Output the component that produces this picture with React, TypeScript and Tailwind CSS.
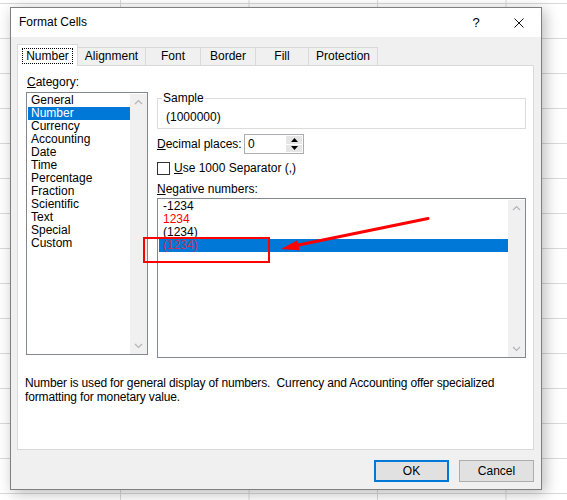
import React from 'react';

const categories = [
  'General',
  'Number',
  'Currency',
  'Accounting',
  'Date',
  'Time',
  'Percentage',
  'Fraction',
  'Scientific',
  'Text',
  'Special',
  'Custom',
];

const negatives = [
  { label: '-1234', red: false },
  { label: '1234', red: true },
  { label: '(1234)', red: false },
  { label: '(1234)', red: true },
];

const tabs = [
  { label: 'Number', w: 'w-[61px]' },
  { label: 'Alignment', w: 'w-[69px]' },
  { label: 'Font', w: 'w-[56px]' },
  { label: 'Border', w: 'w-[56px]' },
  { label: 'Fill', w: 'w-[54px]' },
  { label: 'Protection', w: 'w-[70px]' },
];

const Chevron: React.FC<{ down?: boolean }> = ({ down }) => (
  <svg width="9" height="6" viewBox="0 0 9 6" className="shrink-0">
    <polyline
      points={down ? '1,1 4.5,4.5 8,1' : '1,5 4.5,1.5 8,5'}
      fill="none"
      stroke="#b4b4b4"
      strokeWidth={1.2}
    />
  </svg>
);

const ScrollBar: React.FC = () => (
  <div className="w-[17px] bg-[#f0f0f0] flex flex-col items-center justify-between py-[5px]">
    <Chevron />
    <Chevron down />
  </div>
);

export default function App() {
  return (
    <div className="relative w-[567px] h-[500px] overflow-hidden bg-white bg-[linear-gradient(to_right,#d9d9d9_1px,transparent_1px),linear-gradient(to_bottom,#d9d9d9_1px,transparent_1px)] bg-[length:128.5px_35px] bg-[position:120px_3px] font-['Liberation_Sans',Arial,sans-serif] text-[12px] text-black">
      {/* dialog window */}
      <div className="absolute left-[10px] top-[7px] w-[532px] h-[483px] flex flex-col border border-[#7f7f7f] bg-[#f0f0f0] shadow-[3px_3px_14px_rgba(0,0,0,0.28)]">
        <div className="h-[29px] bg-white flex items-center pl-[8px]">
          <span className="leading-[15px]">Format Cells</span>
          <span className="ml-auto w-[16px] text-center text-[13px] leading-[15px]">?</span>
          <svg width="10" height="10" viewBox="0 0 10 10" className="ml-[30px] mr-[17px]">
            <path d="M0.5 0.5 L9.5 9.5 M9.5 0.5 L0.5 9.5" stroke="#111" strokeWidth={1} />
          </svg>
        </div>

        <div className="flex-1 flex flex-col pl-[6px] pr-[7px] pt-[7px] pb-[7px]">
          {/* tabs */}
          <div className="flex items-end h-[21px]">
            {tabs.map((t, i) =>
              i === 0 ? (
                <div
                  key={t.label}
                  className={`${t.w} h-[22px] -mb-[1px] relative z-10 bg-white border border-b-0 border-[#d9d9d9] flex items-start justify-center pt-[3px]`}
                >
                  <span className="border border-dotted border-black px-[3px] leading-[14px]">{t.label}</span>
                </div>
              ) : (
                <div
                  key={t.label}
                  className={`${t.w} h-[18px] -ml-[1px] bg-[#f0f0f0] border border-b-0 border-[#d9d9d9] flex items-center justify-center leading-[15px]`}
                >
                  {t.label}
                </div>
              )
            )}
          </div>

          {/* page */}
          <div className="h-[385px] bg-white border border-[#d9d9d9] flex flex-col">
            <div className="flex pl-[8px] pt-[9px]">
              <div className="w-[122px] flex flex-col">
                <div className="leading-[15px] ml-[1px]">
                  <u>C</u>ategory:
                </div>
                <div className="mt-[2px] h-[263px] border border-[#828790] flex p-[1px] pr-0 pb-0">
                  <div className="w-[102px] flex flex-col">
                    {categories.map((c) => (
                      <div
                        key={c}
                        className={`h-[13px] leading-[13px] px-[3px] ${c === 'Number' ? 'bg-[#0078d7] text-white' : ''}`}
                      >
                        {c}
                      </div>
                    ))}
                  </div>
                  <ScrollBar />
                </div>
              </div>

              <div className="ml-[9px] w-[369px] flex flex-col">
                <div className="relative mt-[23px] h-[31px] border border-[#dcdcdc] pt-[11px] pl-[8px] leading-[15px]">
                  <span className="absolute left-[4px] -top-[8px] bg-white px-[1px] leading-[15px]">Sample</span>
                  (1000000)
                </div>

                <div className="mt-[5px] flex items-center h-[20px]">
                  <span className="w-[87px] leading-[15px]">
                    <u>D</u>ecimal places:
                  </span>
                  <div className="w-[60px] h-[20px] border border-[#abadb3] bg-white flex">
                    <span className="flex-1 pl-[3px] leading-[18px]">0</span>
                    <div className="w-[16px] my-[1px] mr-[1px] flex flex-col gap-[1px]">
                      <div className="flex-1 bg-[#e6e6e6] flex items-center justify-center">
                        <svg width="7" height="4" viewBox="0 0 7 4">
                          <polygon points="0,4 3.5,0 7,4" fill="#000" />
                        </svg>
                      </div>
                      <div className="flex-1 bg-[#e6e6e6] flex items-center justify-center">
                        <svg width="7" height="4" viewBox="0 0 7 4">
                          <polygon points="0,0 3.5,4 7,0" fill="#000" />
                        </svg>
                      </div>
                    </div>
                  </div>
                </div>

                <div className="mt-[8px] flex items-center h-[13px]">
                  <div className="w-[13px] h-[13px] border border-[#333] bg-white" />
                  <span className="ml-[4px] leading-[15px]">
                    <u>U</u>se 1000 Separator (,)
                  </span>
                </div>

                <div className="mt-[7px] leading-[15px]">
                  <u>N</u>egative numbers:
                </div>
                <div className="mt-[1px] h-[160px] border border-[#828790] flex p-[1px] pr-0 pb-0">
                  <div className="w-[349px] flex flex-col">
                    {negatives.map((n, i) => {
                      const selected = i === 3;
                      return (
                        <div
                          key={i}
                          className={`h-[13px] leading-[13px] px-[4px] ${selected ? 'bg-[#0078d7]' : ''} ${
                            n.red ? (selected ? 'text-[#c8305c]' : 'text-[#ff0000]') : ''
                          }`}
                        >
                          {n.label}
                        </div>
                      );
                    })}
                  </div>
                  <ScrollBar />
                </div>
              </div>
            </div>

            <p className="mt-[18px] px-[7px] leading-[14px] tracking-[-0.15px]">
              Number is used for general display of numbers.&nbsp; Currency and Accounting offer specialized
              <br />
              formatting for monetary value.
            </p>
          </div>

          <div className="mt-[10px] flex justify-end gap-[10px]">
            <button className="w-[75px] h-[22px] border-2 border-[#0078d7] bg-[#e1e1e1] leading-[15px]">OK</button>
            <button className="w-[75px] h-[22px] border border-[#adadad] bg-[#e1e1e1] leading-[15px]">Cancel</button>
          </div>
        </div>
      </div>

      {/* red annotation drawn over the dialog */}
      <div className="absolute left-[143px] top-[237px] w-[127px] h-[26px] border-2 border-[#ff0000] pointer-events-none" />
      <svg className="absolute left-0 top-0 pointer-events-none" width="567" height="500" viewBox="0 0 567 500">
        <line x1="428" y1="218.5" x2="296" y2="245.5" stroke="#ff0000" strokeWidth={3} strokeLinecap="round" />
        <polygon points="281,249 299.5,250.3 297.5,240.2" fill="#ff0000" />
      </svg>
    </div>
  );
}
